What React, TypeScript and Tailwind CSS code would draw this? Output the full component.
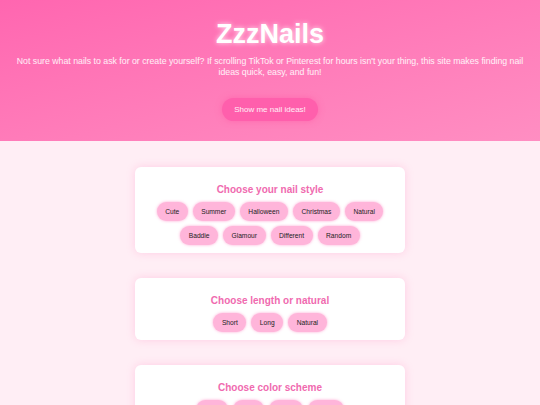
const sections = [
  {
    title: "Choose your nail style",
    options: ["Cute", "Summer", "Halloween", "Christmas", "Natural", "Baddie", "Glamour", "Different", "Random"],
  },
  {
    title: "Choose length or natural",
    options: ["Short", "Long", "Natural"],
  },
  {
    title: "Choose color scheme",
    options: ["Light", "Dark", "Bright", "Pastel"],
  },
];

export default function App() {
  return (
    <div className="min-h-screen bg-[#ffeef5] font-['Liberation_Sans',Arial,sans-serif]">
      <header className="bg-linear-to-br from-[#ff66b0] to-[#ff8ec2] px-[10px] pt-[19px] pb-[20px] text-center">
        <h1 className="text-[27px] font-bold leading-[30px] text-white [text-shadow:0_0_5px_rgba(255,255,255,0.8)]">
          ZzzNails
        </h1>
        <p className="mt-[7px] text-[8.75px] leading-[11px] text-white/90">
          Not sure what nails to ask for or create yourself? If scrolling TikTok or Pinterest for hours isn't your thing, this site makes finding nail ideas quick, easy, and fun!
        </p>
        <button className="mt-[20px] rounded-full bg-[#ff5fac] px-[12px] py-[6.5px] text-[8px] leading-[10px] text-white/90 shadow-[0_0_6px_rgba(255,80,160,0.5)]">
          Show me nail ideas!
        </button>
      </header>

      <main className="flex flex-col items-center gap-[25px] pt-[26px] pb-[25px]">
        {sections.map((s) => (
          <section
            key={s.title}
            className="w-1/2 rounded-[6px] bg-white px-[8px] pt-[17px] pb-[8px] text-center shadow-[0_0_8px_rgba(255,130,190,0.3)]"
          >
            <h2 className="text-[10px] font-bold leading-[12px] text-[#f06aaf]">{s.title}</h2>
            <div className="mt-[6px] flex flex-wrap justify-center gap-[5px]">
              {s.options.map((o) => (
                <button
                  key={o}
                  className="rounded-full bg-[#ffb5da] px-[8.5px] py-[5.5px] text-[6.67px] leading-[8px] text-[#222] shadow-[0_0_3px_rgba(255,105,180,0.6)]"
                >
                  {o}
                </button>
              ))}
            </div>
          </section>
        ))}
      </main>
    </div>
  );
}
